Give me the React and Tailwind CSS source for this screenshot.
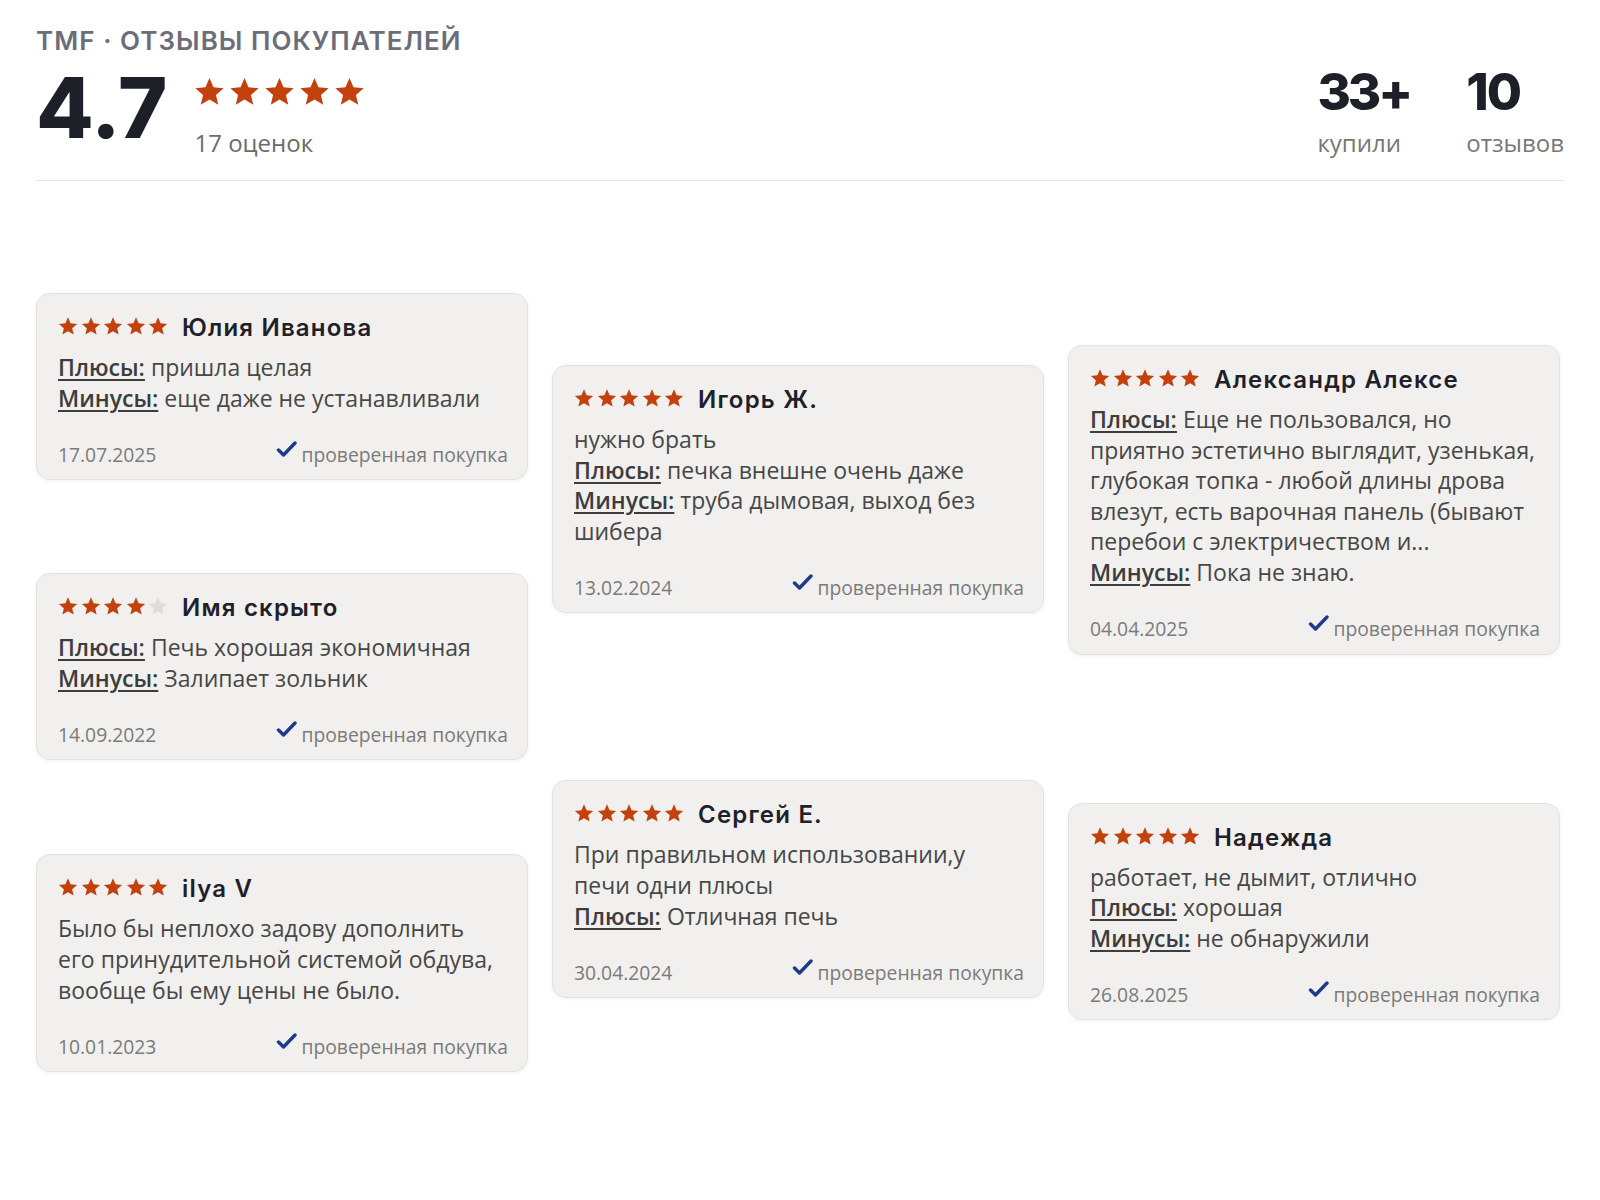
import React from "react";

const reviews = [
  [
    {
      mt: "mt-0",
      rating: 5,
      name: "Юлия Иванова",
      lines: [
        { label: "Плюсы:", text: "пришла целая" },
        { label: "Минусы:", text: "еще даже не устанавливали" },
      ],
      date: "17.07.2025",
    },
    {
      mt: "mt-[93px]",
      rating: 4,
      name: "Имя скрыто",
      lines: [
        { label: "Плюсы:", text: "Печь хорошая экономичная" },
        { label: "Минусы:", text: "Залипает зольник" },
      ],
      date: "14.09.2022",
    },
    {
      mt: "mt-[94px]",
      rating: 5,
      name: "ilya V",
      lines: [
        {
          text: "Было бы неплохо задову дополнить его принудительной системой обдува, вообще бы ему цены не было.",
        },
      ],
      date: "10.01.2023",
    },
  ],
  [
    {
      mt: "mt-[72px]",
      rating: 5,
      name: "Игорь Ж.",
      lines: [
        { text: "нужно брать" },
        { label: "Плюсы:", text: "печка внешне очень даже" },
        { label: "Минусы:", text: "труба дымовая, выход без шибера" },
      ],
      date: "13.02.2024",
    },
    {
      mt: "mt-[167px]",
      rating: 5,
      name: "Сергей Е.",
      lines: [
        { text: "При правильном использовании,у печи одни плюсы" },
        { label: "Плюсы:", text: "Отличная печь" },
      ],
      date: "30.04.2024",
    },
  ],
  [
    {
      mt: "mt-[52px]",
      rating: 5,
      name: "Александр Алексе",
      lines: [
        {
          label: "Плюсы:",
          text: "Еще не пользовался, но приятно эстетично выглядит, узенькая, глубокая топка - любой длины дрова влезут, есть варочная панель (бывают перебои с электричеством и...",
        },
        { label: "Минусы:", text: "Пока не знаю." },
      ],
      date: "04.04.2025",
    },
    {
      mt: "mt-[148px]",
      rating: 5,
      name: "Надежда",
      lines: [
        { text: "работает, не дымит, отлично" },
        { label: "Плюсы:", text: "хорошая" },
        { label: "Минусы:", text: "не обнаружили" },
      ],
      date: "26.08.2025",
    },
  ],
];

const Star = ({ size, filled }) => (
  <svg width={size} height={size} viewBox="0 0 24 24">
    <path
      d="M12 1.5l3.09 7.26 7.86.69-5.96 5.18 1.78 7.7L12 18.27l-6.77 4.06 1.78-7.7-5.96-5.18 7.86-.69z"
      fill={filled ? "#c2410c" : "#dddcda"}
    />
  </svg>
);

const Stars = ({ rating, size, className }) => (
  <div className={className}>
    {[1, 2, 3, 4, 5].map((i) => (
      <Star key={i} size={size} filled={i <= rating} />
    ))}
  </div>
);

const Check = () => (
  <svg width="21" height="17" viewBox="0 0 21 17" className="-mt-3">
    <path
      d="M2.5 9l5 5L19 2"
      fill="none"
      stroke="#1e3a8a"
      strokeWidth="3.4"
      strokeLinecap="round"
      strokeLinejoin="round"
    />
  </svg>
);

const ReviewCard = ({ review }) => (
  <div
    className={`${review.mt} rounded-[14px] border border-[#e3e2df] bg-[#f1f0ee] px-[21px] pt-5 pb-3 shadow-[0_1px_4px_rgba(0,0,0,0.06)]`}
  >
    <div className="flex h-7 items-center gap-[14px]">
      <Stars rating={review.rating} size={20} className="flex gap-[2.5px] -mt-1" />
      <span className="font-['Inter',sans-serif] text-[24px] font-semibold tracking-[0.05em] text-[#1f2028]">
        {review.name}
      </span>
    </div>

    <div className="mt-[10px] text-[23px] leading-[30.6px] text-[#474747]">
      {review.lines.map((line, i) => (
        <p key={i}>
          {line.label && (
            <span className="font-semibold text-[#3d3d3d] underline decoration-2 underline-offset-[3px]">
              {line.label}
            </span>
          )}
          {line.label && " "}
          {line.text}
        </p>
      ))}
    </div>

    <div className="mt-[30px] -mr-[2px] flex h-6 items-center justify-between text-[19.3px] text-[#7b7b7b]">
      <span>{review.date}</span>
      <span className="flex items-center gap-[5px]">
        <Check />
        проверенная покупка
      </span>
    </div>
  </div>
);

const App = () => {
  return (
    <div className="min-h-[1200px] bg-white px-9 pt-[25px] font-['Open_Sans',sans-serif]">

      <div className="flex items-start justify-between border-b border-[#e3e3e3] pb-[23px]">

        <div>
          <div className="font-['Inter',sans-serif] text-[26px] font-semibold leading-8 tracking-[0.04em] text-[#6b6e78]">
            TMF · ОТЗЫВЫ ПОКУПАТЕЛЕЙ
          </div>

          <div className="mt-[9px] flex items-start gap-[27px]">
            <div className="font-['Inter',sans-serif] text-[84px] font-extrabold leading-none text-[#1e2029]">
              4.7
            </div>

            <div className="pt-[10px]">
              <Stars rating={5} size={31} className="flex gap-[4px]" />
              <div className="mt-[22px] text-[24px] leading-7 text-[#6b6b6b]">
                17 оценок
              </div>
            </div>
          </div>
        </div>

        <div className="mt-[41px] flex gap-[56px]">
          <div>
            <div className="font-['Inter',sans-serif] text-[51px] font-extrabold leading-none tracking-[-0.06em] text-[#1e2029]">
              33+
            </div>
            <div className="mt-[12px] text-[24px] leading-7 text-[#777]">
              купили
            </div>
          </div>

          <div>
            <div className="font-['Inter',sans-serif] text-[51px] font-extrabold leading-none tracking-[-0.04em] text-[#1e2029]">
              10
            </div>
            <div className="mt-[12px] text-[24px] leading-7 text-[#777]">
              отзывов
            </div>
          </div>
        </div>

      </div>

      <div className="mt-[112px] grid grid-cols-3 items-start gap-x-6 pr-1">
        {reviews.map((column, c) => (
          <div key={c} className="flex flex-col">
            {column.map((review) => (
              <ReviewCard key={review.name} review={review} />
            ))}
          </div>
        ))}
      </div>

    </div>
  );
};

export default App;
